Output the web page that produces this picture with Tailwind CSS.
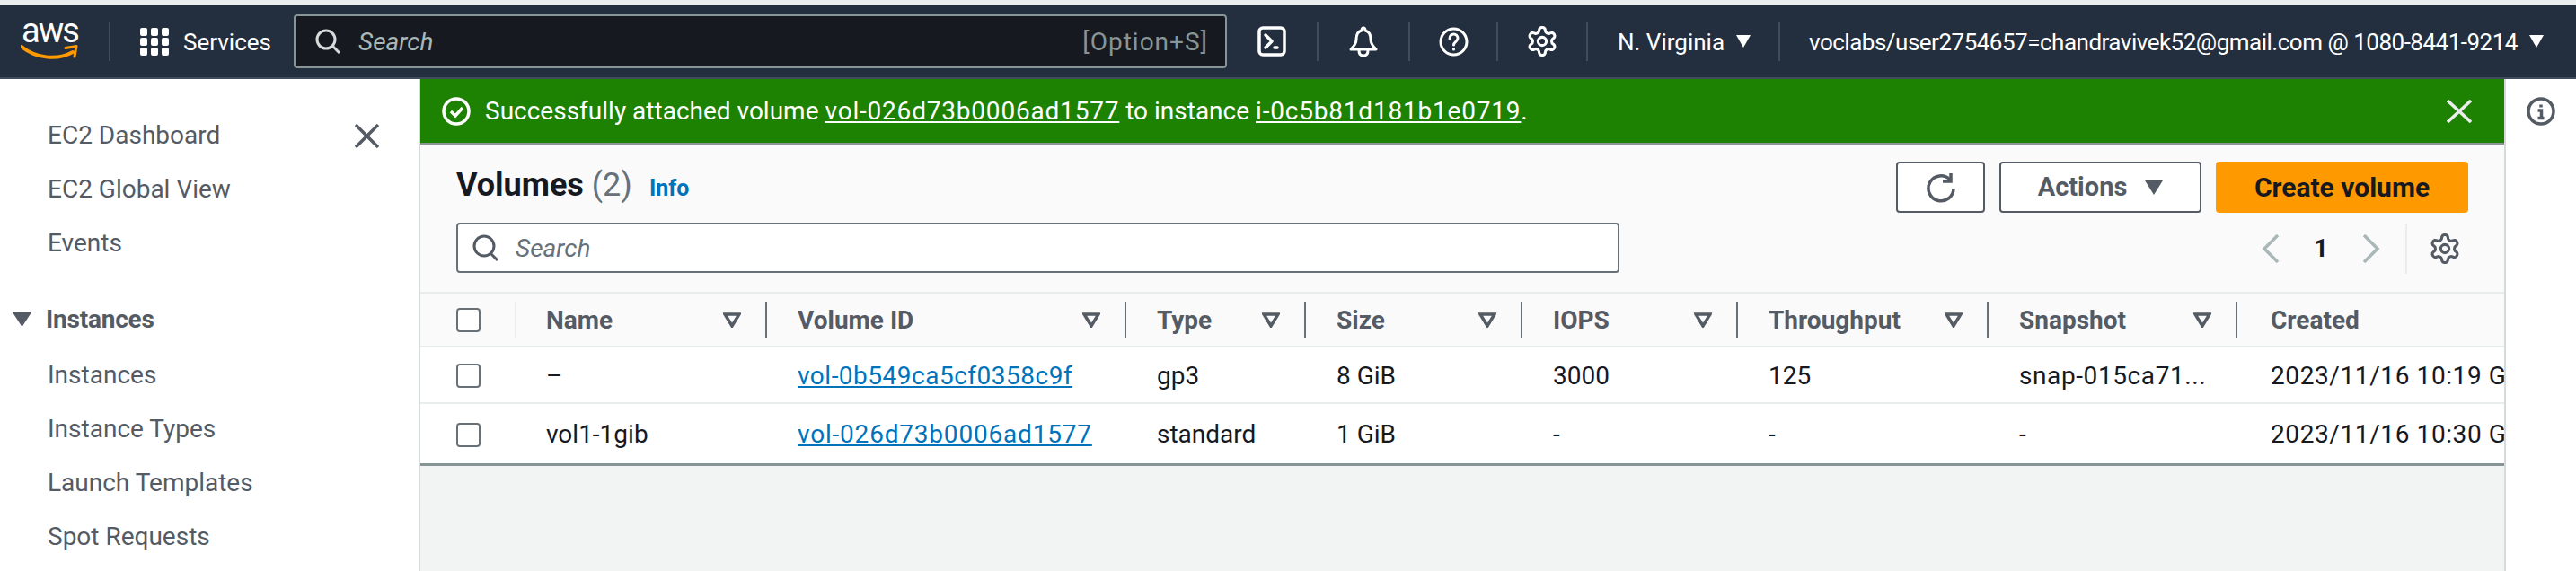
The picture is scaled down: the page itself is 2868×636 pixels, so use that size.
<!DOCTYPE html>
<html lang="en">
<head>
    <meta charset="UTF-8" />
    <title>Volumes | EC2</title>
    <script src="https://cdn.jsdelivr.net/npm/@tailwindcss/browser@4"></script>
</head>
<body class="h-[636px] w-[2868px] overflow-hidden bg-white font-[Roboto,sans-serif] text-[28px] text-[#16191f]">

    <div class="h-[6px] bg-[#eaeded]"></div>

    <!-- top nav -->
    <nav class="flex h-[82px] items-center border-b-2 border-[#414d5c] bg-[#232f3e] text-[26px] text-white">
        <div class="relative flex h-[44px] w-[121px] shrink-0 flex-col items-start pl-[23px]">
            <span class="mt-[-10px] ml-[1px] text-[38px] leading-[40px] tracking-[-2px]">aws</span>
            <svg class="absolute top-[26px] left-[23px]" width="64" height="18" viewBox="0 0 64 18" fill="none">
                <path d="M1 2C18 16 42 17 58 8" stroke="#ff9900" stroke-width="4" stroke-linecap="round"/>
                <path d="M50 3.5L62 1.5L60 13" stroke="#ff9900" stroke-width="3" stroke-linecap="round" stroke-linejoin="round"/>
            </svg>
        </div>
        <div class="flex h-[44px] w-[206px] shrink-0 items-center gap-[16px] border-l-2 border-[#414d5c] pl-[33px]">
            <svg width="32" height="44" viewBox="0 0 32 44" fill="white">
                <rect x="0" y="7" width="8" height="9" rx="2"/><rect x="12" y="7" width="8" height="9" rx="2"/><rect x="24" y="7" width="8" height="9" rx="2"/>
                <rect x="0" y="18" width="8" height="9" rx="2"/><rect x="12" y="18" width="8" height="9" rx="2"/><rect x="24" y="18" width="8" height="9" rx="2"/>
                <rect x="0" y="29" width="8" height="9" rx="2"/><rect x="12" y="29" width="8" height="9" rx="2"/><rect x="24" y="29" width="8" height="9" rx="2"/>
            </svg>
            <span class="pt-[2px]">Services</span>
        </div>
        <div class="flex h-[60px] w-[1039px] shrink-0 items-center justify-between rounded-[4px] border-2 border-[#879596] bg-[#16191f] pr-[19px] pl-[22px] text-[#879596]">
            <div class="flex items-center gap-[20px]">
                <svg width="28" height="28" viewBox="0 0 28 28" fill="none" stroke="#d5dbdb" stroke-width="3"><circle cx="12" cy="12" r="10"/><path d="M19 19l8 8"/></svg>
                <span class="pt-[2px] text-[28px] text-[#aab7b8] italic">Search</span>
            </div>
            <span class="pt-[2px] text-[28px] tracking-[1px]">[Option+S]</span>
        </div>
        <div class="flex h-[44px] w-[100px] shrink-0 items-center justify-center">
            <svg width="32" height="34" viewBox="0 0 32 34" fill="none" stroke="white" stroke-width="3.5" stroke-linecap="round" stroke-linejoin="round"><rect x="2" y="2" width="28" height="30" rx="4"/><path d="M9 10l7 7l-7 7M19 24h3"/></svg>
        </div>
        <div class="flex h-[44px] w-[102px] shrink-0 items-center justify-center border-l-2 border-[#414d5c]">
            <svg width="34" height="34" viewBox="0 0 34 34" fill="none" stroke="white" stroke-width="3" stroke-linejoin="round"><path d="M17 2c1 0 2 1 2 3c5 1 6 5 6 10c0 5 3 8 6 11H3c3-3 6-6 6-11c0-5 1-9 6-10c0-2 1-3 2-3z"/><path d="M12 27c0 4 2 6 5 6s5-2 5-6"/></svg>
        </div>
        <div class="flex h-[44px] w-[98px] shrink-0 items-center justify-center border-l-2 border-[#414d5c]">
            <svg width="33" height="33" viewBox="0 0 33 33" fill="none" stroke="white" stroke-width="3" stroke-linecap="round"><circle cx="16.5" cy="16.5" r="14.5"/><path d="M12 13c0-3 2-5 4.5-5s4.500 2 4.500 4.500c0 4-4.500 4-4.500 7.500"/><path d="M16.500 24.500v.5"/></svg>
        </div>
        <div class="flex h-[44px] w-[100px] shrink-0 items-center justify-center border-l-2 border-[#414d5c]">
            <svg width="34" height="34" viewBox="1.500 1 21 22" fill="none" stroke="white" stroke-width="2" stroke-linejoin="round"><path d="M12.220 2h-.44a2 2 0 0 0-2 2v.18a2 2 0 0 1-1 1.730l-.43.25a2 2 0 0 1-2 0l-.15-.08a2 2 0 0 0-2.730.73l-.22.38a2 2 0 0 0 .73 2.730l.15.1a2 2 0 0 1 1 1.720v.51a2 2 0 0 1-1 1.740l-.15.09a2 2 0 0 0-.73 2.730l.22.38a2 2 0 0 0 2.730.73l.15-.08a2 2 0 0 1 2 0l.43.25a2 2 0 0 1 1 1.730V20a2 2 0 0 0 2 2h.44a2 2 0 0 0 2-2v-.18a2 2 0 0 1 1-1.730l.43-.25a2 2 0 0 1 2 0l.15.08a2 2 0 0 0 2.730-.73l.22-.39a2 2 0 0 0-.73-2.730l-.15-.08a2 2 0 0 1-1-1.740v-.5a2 2 0 0 1 1-1.740l.15-.09a2 2 0 0 0 .73-2.730l-.22-.38a2 2 0 0 0-2.730-.73l-.15.08a2 2 0 0 1-2 0l-.43-.25a2 2 0 0 1-1-1.730V4a2 2 0 0 0-2-2z"/><circle cx="12" cy="12" r="3"/></svg>
        </div>
        <div class="flex h-[44px] w-[214px] shrink-0 items-center gap-[13px] border-l-2 border-[#414d5c] pl-[33px]">
            <span class="pt-[2px]">N. Virginia</span>
            <svg width="16" height="14" viewBox="0 0 16 14" fill="white"><path d="M0 0h16L8 14z"/></svg>
        </div>
        <div class="flex h-[44px] shrink-0 items-center gap-[13px] border-l-2 border-[#414d5c] pl-[32px] whitespace-nowrap">
            <span class="pt-[2px] tracking-[-0.5px]">voclabs/user2754657=chandravivek52@gmail.com @ 1080-8441-9214</span>
            <svg width="16" height="14" viewBox="0 0 16 14" fill="white"><path d="M0 0h16L8 14z"/></svg>
        </div>
    </nav>

    <div class="flex h-[548px]">
        <!-- side nav -->
        <aside class="w-[468px] shrink-0 border-r-2 border-[#d5dbdb] bg-white pt-[33px] text-[#545b64]">
            <div class="flex h-[60px] items-center justify-between pr-[44px] pl-[53px]">
                <span>EC2 Dashboard</span>
                <svg width="27" height="27" viewBox="0 0 27 27" fill="none" stroke="#545b64" stroke-width="3.500"><path d="M1 1l25 25M26 1L1 26"/></svg>
            </div>
            <div class="flex h-[60px] items-center pl-[53px]">EC2 Global View</div>
            <div class="flex h-[60px] items-center pl-[53px]">Events</div>
            <div class="mt-[25px] flex h-[60px] items-center gap-[16px] pl-[14px] font-bold">
                <svg width="21" height="16" viewBox="0 0 21 16" fill="#545b64"><path d="M0 0h21L10.500 16z"/></svg>
                <span class="tracking-[-0.2px]">Instances</span>
            </div>
            <div class="mt-[2px] flex h-[60px] items-center pl-[53px]">Instances</div>
            <div class="flex h-[60px] items-center pl-[53px]">Instance Types</div>
            <div class="flex h-[60px] items-center pl-[53px]">Launch Templates</div>
            <div class="flex h-[60px] items-center pl-[53px]">Spot Requests</div>
        </aside>

        <!-- main -->
        <main class="w-[2320px] shrink-0 overflow-hidden bg-[#f2f3f3]">
            <div class="flex h-[73px] items-center justify-between border-b-2 border-[#879596] bg-[#1d8102] pr-[36px] pl-[24px] text-white">
                <div class="flex items-center gap-[16px]">
                    <svg width="32" height="32" viewBox="0 0 32 32" fill="none" stroke="white" stroke-width="3.500"><circle cx="16" cy="16" r="14"/><path d="M10 16l5 5l8-9"/></svg>
                    <span class="pt-[1px]">Successfully attached volume <a class="tracking-[0.8px] underline">vol-026d73b0006ad1577</a> to instance <a class="tracking-[0.8px] underline">i-0c5b81d181b1e0719</a>.</span>
                </div>
                <svg width="28" height="26" viewBox="0 0 28 26" fill="none" stroke="#eaeded" stroke-width="3.500"><path d="M1 1l26 24M27 1L1 25"/></svg>
            </div>

            <!-- header -->
            <div class="flex h-[164px] justify-between bg-[#fafafa] px-[40px]">
                <div>
                    <div class="flex h-[87px] items-center pt-[2px]">
                        <h1 class="text-[36px] font-bold">Volumes <span class="font-normal text-[#687078]">(2)</span></h1>
                        <a class="mt-[8px] ml-[19px] text-[25px] font-bold text-[#0073bb]">Info</a>
                    </div>
                    <div class="flex h-[56px] w-[1295px] items-center gap-[18px] rounded-[4px] border-2 border-[#687078] bg-white pl-[16px]">
                        <svg width="30" height="30" viewBox="0 0 30 30" fill="none" stroke="#545b64" stroke-width="3"><circle cx="13" cy="13" r="11"/><path d="M20 21l8 8"/></svg>
                        <span class="pt-[2px] text-[28px] text-[#687078] italic">Search</span>
                    </div>
                </div>
                <div class="flex flex-col items-end pt-[19px]">
                    <div class="flex gap-[16px] font-bold">
                        <div class="flex h-[57px] w-[99px] items-center justify-center rounded-[4px] border-2 border-[#545b64] bg-white">
                            <svg width="32" height="34" viewBox="0 0 32 34" fill="none" stroke="#545b64" stroke-width="3.500"><path d="M26 8a14 14 0 1 0 4 10"/><path d="M27 1v9h-9"/></svg>
                        </div>
                        <div class="flex h-[57px] w-[225px] items-center justify-center gap-[20px] rounded-[4px] border-2 border-[#545b64] bg-white text-[29px] text-[#545b64]">
                            <span>Actions</span>
                            <svg width="20" height="16" viewBox="0 0 20 16" fill="#545b64"><path d="M0 0h20L10 16z"/></svg>
                        </div>
                        <div class="flex h-[57px] w-[281px] items-center justify-center rounded-[4px] bg-[#ff9900] text-[30px]">Create volume</div>
                    </div>
                    <div class="mt-[12px] flex h-[56px] items-center">
                        <svg width="20" height="32" viewBox="0 0 20 32" fill="none" stroke="#aab7b8" stroke-width="3.500"><path d="M18 1L3 16l15 15"/></svg>
                        <span class="mx-[38px] font-bold">1</span>
                        <svg width="20" height="32" viewBox="0 0 20 32" fill="none" stroke="#aab7b8" stroke-width="3.500"><path d="M2 1l15 15L2 31"/></svg>
                        <div class="mr-[25px] ml-[28px] h-[56px] border-l-2 border-[#eaeded]"></div>
                        <svg class="mr-[9px]" width="34" height="34" viewBox="1.500 1 21 22" fill="none" stroke="#545b64" stroke-width="2" stroke-linejoin="round"><path d="M12.220 2h-.44a2 2 0 0 0-2 2v.18a2 2 0 0 1-1 1.730l-.43.25a2 2 0 0 1-2 0l-.15-.08a2 2 0 0 0-2.730.73l-.22.38a2 2 0 0 0 .73 2.730l.15.1a2 2 0 0 1 1 1.720v.51a2 2 0 0 1-1 1.740l-.15.09a2 2 0 0 0-.73 2.730l.22.38a2 2 0 0 0 2.730.73l.15-.08a2 2 0 0 1 2 0l.43.25a2 2 0 0 1 1 1.730V20a2 2 0 0 0 2 2h.44a2 2 0 0 0 2-2v-.18a2 2 0 0 1 1-1.730l.43-.25a2 2 0 0 1 2 0l.15.08a2 2 0 0 0 2.730-.73l.22-.39a2 2 0 0 0-.73-2.730l-.15-.08a2 2 0 0 1-1-1.740v-.5a2 2 0 0 1 1-1.740l.15-.09a2 2 0 0 0 .73-2.730l-.22-.38a2 2 0 0 0-2.730-.73l-.15.08a2 2 0 0 1-2 0l-.43-.25a2 2 0 0 1-1-1.730V4a2 2 0 0 0-2-2z"/><circle cx="12" cy="12" r="3"/></svg>
                    </div>
                </div>
            </div>

            <!-- table -->
            <div class="border-b-[3px] border-[#879596] whitespace-nowrap">
                <div class="grid h-[62px] grid-cols-[107px_279px_400px_200px_241px_240px_279px_277px_297px] items-center border-y-2 border-[#eaeded] bg-[#fafafa] font-bold text-[#545b64]">
                    <div class="flex h-[40px] items-center border-r-2 border-[#eaeded] pl-[40px]"><div class="h-[27px] w-[27px] rounded-[4px] border-2 border-[#687078] bg-white"></div></div>
                    <div class="flex h-[40px] items-center justify-between border-r-2 border-[#687078] pr-[27px] pl-[33px]"><span class="pt-[2px]">Name</span><svg width="20" height="17" viewBox="0 0 20 17" fill="none" stroke="#545b64" stroke-width="3.500"><path d="M2 2h16l-8 13z"/></svg></div>
                    <div class="flex h-[40px] items-center justify-between border-r-2 border-[#687078] pr-[27px] pl-[34px]"><span class="pt-[2px]">Volume ID</span><svg width="20" height="17" viewBox="0 0 20 17" fill="none" stroke="#545b64" stroke-width="3.500"><path d="M2 2h16l-8 13z"/></svg></div>
                    <div class="flex h-[40px] items-center justify-between border-r-2 border-[#687078] pr-[27px] pl-[34px]"><span class="pt-[2px]">Type</span><svg width="20" height="17" viewBox="0 0 20 17" fill="none" stroke="#545b64" stroke-width="3.500"><path d="M2 2h16l-8 13z"/></svg></div>
                    <div class="flex h-[40px] items-center justify-between border-r-2 border-[#687078] pr-[27px] pl-[34px]"><span class="pt-[2px]">Size</span><svg width="20" height="17" viewBox="0 0 20 17" fill="none" stroke="#545b64" stroke-width="3.500"><path d="M2 2h16l-8 13z"/></svg></div>
                    <div class="flex h-[40px] items-center justify-between border-r-2 border-[#687078] pr-[27px] pl-[34px]"><span class="pt-[2px]">IOPS</span><svg width="20" height="17" viewBox="0 0 20 17" fill="none" stroke="#545b64" stroke-width="3.500"><path d="M2 2h16l-8 13z"/></svg></div>
                    <div class="flex h-[40px] items-center justify-between border-r-2 border-[#687078] pr-[27px] pl-[34px]"><span class="pt-[2px]">Throughput</span><svg width="20" height="17" viewBox="0 0 20 17" fill="none" stroke="#545b64" stroke-width="3.500"><path d="M2 2h16l-8 13z"/></svg></div>
                    <div class="flex h-[40px] items-center justify-between border-r-2 border-[#687078] pr-[27px] pl-[34px]"><span class="pt-[2px]">Snapshot</span><svg width="20" height="17" viewBox="0 0 20 17" fill="none" stroke="#545b64" stroke-width="3.500"><path d="M2 2h16l-8 13z"/></svg></div>
                    <div class="flex h-[40px] items-center pl-[37px]"><span class="pt-[2px]">Created</span></div>
                </div>
                <div class="grid h-[63px] grid-cols-[107px_279px_400px_200px_241px_240px_279px_277px_297px] items-center border-b-2 border-[#eaeded] bg-white pt-[2px]">
                    <div class="pl-[40px]"><div class="h-[27px] w-[27px] rounded-[4px] border-2 border-[#687078] bg-white"></div></div>
                    <div class="pl-[33px]">–</div>
                    <div class="pl-[34px]"><a class="tracking-[0.5px] text-[#0073bb] underline">vol-0b549ca5cf0358c9f</a></div>
                    <div class="pl-[34px]">gp3</div>
                    <div class="pl-[34px]">8 GiB</div>
                    <div class="pl-[34px]">3000</div>
                    <div class="pl-[34px]">125</div>
                    <div class="pl-[34px] tracking-[0.6px]">snap-015ca71...</div>
                    <div class="pl-[37px] tracking-[0.6px]">2023/11/16 10:19 GMT</div>
                </div>
                <div class="grid h-[66px] grid-cols-[107px_279px_400px_200px_241px_240px_279px_277px_297px] items-center bg-white pt-[2px]">
                    <div class="pl-[40px]"><div class="h-[27px] w-[27px] rounded-[4px] border-2 border-[#687078] bg-white"></div></div>
                    <div class="pl-[33px]">vol1-1gib</div>
                    <div class="pl-[34px]"><a class="tracking-[0.8px] text-[#0073bb] underline">vol-026d73b0006ad1577</a></div>
                    <div class="pl-[34px]">standard</div>
                    <div class="pl-[34px]">1 GiB</div>
                    <div class="pl-[34px]">-</div>
                    <div class="pl-[34px]">-</div>
                    <div class="pl-[34px]">-</div>
                    <div class="pl-[37px] tracking-[0.6px]">2023/11/16 10:30 GMT</div>
                </div>
            </div>
        </main>

        <!-- tools panel -->
        <div class="flex w-[80px] shrink-0 justify-center border-l-2 border-[#d5dbdb] bg-white pt-[20px]">
            <svg width="32" height="32" viewBox="0 0 32 32" fill="none" stroke="#545b64" stroke-width="3.500"><circle cx="16" cy="16" r="14"/><path d="M16 8.500v3M12.500 15H16.500V23M12.500 23.500h7"/></svg>
        </div>
    </div>
</body>
</html>
